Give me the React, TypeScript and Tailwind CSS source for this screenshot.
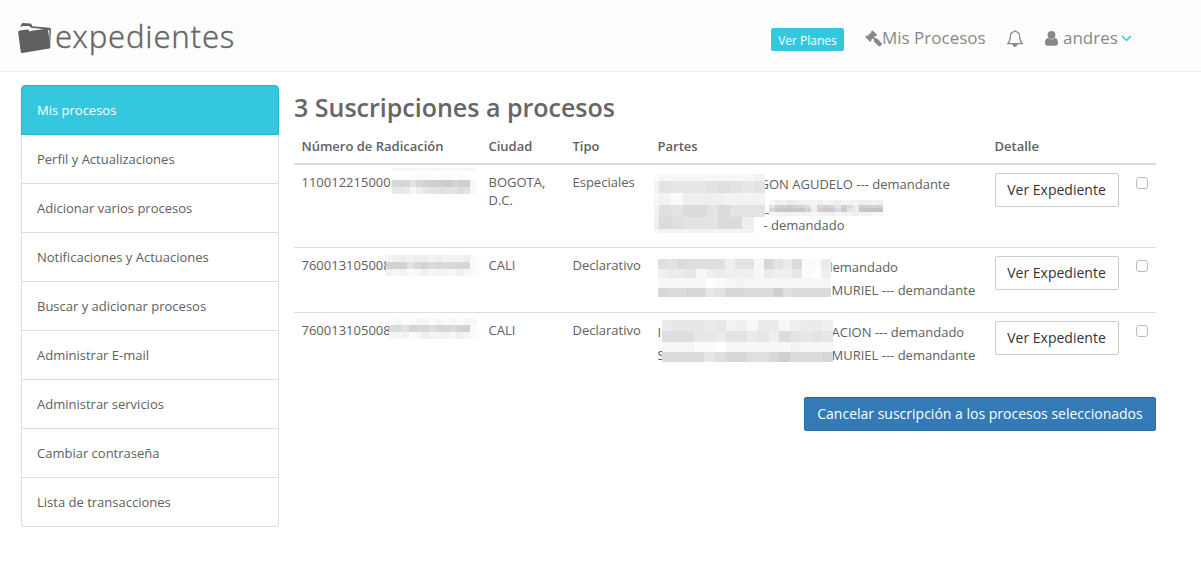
import React from 'react';

interface MosaicProps {
  rows: string[];
  cell: number;
  heights: number[];
  className: string;
}

// Each hex digit is a grey level, "." leaves the cell empty
const Mosaic: React.FC<MosaicProps> = ({ rows, cell, heights, className }) => (
  <span className={`absolute flex flex-col ${className}`} aria-hidden="true">
    {rows.map((row, y) => (
      <span key={y} className="flex" style={{ height: heights[y] }}>
        {row.split('').map((level, x) => {
          const grey = 195 + parseInt(level, 16) * 4;
          return <span key={x} style={{ width: cell, background: level === '.' ? 'none' : `rgb(${grey},${grey},${grey})` }} />;
        })}
      </span>
    ))}
  </span>
);

const FolderLogo: React.FC = () => (
  <svg className="w-[34px] h-[32px] shrink-0" viewBox="0 0 34 32" fill="#606060">
    <path d="M2.3 5.2 3.3 2.2Q3.8 1 5 1L12 1.6Q13.2 1.7 13.7 2.8L14.4 4.2 31.5 5.8Q33.2 6 33 7.5L32 25.6 31.3 25.8 31.4 8.6 29.9 7.4 13 5.8 11.8 4.6Q11.4 3.9 10.4 3.9L4.5 4Z" />
    <path d="M1.5 8.6Q.1 9 .2 10.4L2.7 29.7Q3 31.2 4.4 30.9L31.4 26.6Q32.6 26.3 32.4 25L30 7.8Q29.7 6.5 28.4 6.7L13.7 8.7 11.7 9.5 10.6 8.1Q10.1 7.3 9.2 7.4Z" />
  </svg>
);

const GavelIcon: React.FC = () => (
  <svg className="w-[17px] h-[17px] shrink-0" viewBox="0 0 17 17" fill="#888">
    <path d="M7.4.2 12.2 5 10.9 6.4 10.1 5.9 9.1 6.9 10.7 8.6 11.6 8 16.5 12.9Q17.3 13.9 16.5 14.9L15.4 16Q14.4 16.8 13.4 15.9L8.7 11.2 9.2 10.1 7.6 8.4 6.1 9.9 6.6 10.7 5.3 12 .2 7 1.6 5.6 2.4 6.1 6.6 2 6 1.4Z" />
  </svg>
);

const BellIcon: React.FC = () => (
  <svg className="w-4 h-[17px] shrink-0" viewBox="0 0 16 17" fill="none" stroke="#888" strokeWidth="1.2">
    <path d="M7 1.6Q8 .2 9 1.6C11.7 2.2 12.6 4.3 12.6 6.6 12.7 10 13.6 12.2 15.3 13.7H.7C2.4 12.2 3.3 10 3.4 6.6 3.4 4.3 4.3 2.2 7 1.6Z" />
    <path d="M6 14Q6.3 16.3 8 16.3T10 14Z" fill="#888" />
  </svg>
);

const UserIcon: React.FC = () => (
  <svg className="w-[13px] h-[15px] shrink-0" viewBox="0 0 13 15" fill="#888">
    <circle cx="6.5" cy="4" r="3.9" />
    <path d="M3.1 7.1Q6.5 9.9 9.9 7.1C12.4 7.4 13 9.6 13 12Q13 14.7 10.6 14.7H2.4Q0 14.7 0 12C0 9.6.6 7.4 3.1 7.1Z" />
  </svg>
);

const menuItems = [
  'Mis procesos',
  'Perfil y Actualizaciones',
  'Adicionar varios procesos',
  'Notificaciones y Actuaciones',
  'Buscar y adicionar procesos',
  'Administrar E-mail',
  'Administrar servicios',
  'Cambiar contraseña',
  'Lista de transacciones',
];

const Header: React.FC = () => (
  <header className="mt-1 h-[68px] bg-[#fdfdfd] border-b border-[#f0f0f0] flex justify-between items-start pl-[18px] pr-[69px]">
    <a href="#" className="flex items-start pt-[18px]">
      <FolderLogo />
      <span className="ml-[3px] -mt-[4px] text-[31px] leading-[36px] tracking-[0.8px] text-[#666] font-['Noto_Sans'] font-light [-webkit-text-stroke:0.3px_#666]">expedientes</span>
    </a>
    <nav className="flex items-start pt-[22px] text-[17px] leading-6 text-[#888]">
      <a href="#" className="mt-[2px] h-[23px] w-[73px] rounded-[2px] bg-[#33c8de] text-center text-[12px] leading-[25px] text-white">Ver Planes</a>
      <a href="#" className="ml-[21px] flex w-[121px] items-center whitespace-nowrap">
        <GavelIcon />
        <span>Mis Procesos</span>
      </a>
      <a href="#" className="ml-[21px] mt-[4px]"><BellIcon /></a>
      <a href="#" className="ml-[22px] flex items-center whitespace-nowrap">
        <UserIcon />
        <span className="ml-[5px] w-[55px]">andres</span>
        <svg className="ml-[3px] w-[11px] h-[7px]" viewBox="0 0 11 7" fill="none" stroke="#33c8de" strokeWidth="1.5">
          <path d="m1 1 4.5 4.5L10 1" />
        </svg>
      </a>
    </nav>
  </header>
);

const Sidebar: React.FC = () => (
  <aside className="mt-[13px] w-[258px] shrink-0 text-[13px]">
    <ul>
      {menuItems.map((item, i) => (
        <li
          key={item}
          className={
            i === 0
              ? 'h-[50px] rounded-t border border-[#26b4c9] bg-[#33c8de] text-white'
              : 'h-[49px] border border-t-0 border-[#ddd] last:rounded-b'
          }
        >
          <a href="#" className={i === 0 ? 'block px-[15px] leading-[49px]' : 'block px-[15px] leading-[48px]'}>{item}</a>
        </li>
      ))}
    </ul>
  </aside>
);

interface Proceso {
  numero: string;
  ciudad: string;
  tipo: string;
  height: string;
  numeroMask: React.ReactNode;
  partes: React.ReactNode;
}

const procesos: Proceso[] = [
  {
    numero: '110012215000',
    ciudad: 'BOGOTA, D.C.',
    tipo: 'Especiales',
    height: 'h-[83px]',
    numeroMask: (
      <Mosaic
        rows={['dddddddddddddd', '..............', 'ffffeeefeefeff', '5558543332433d', '99adb98878868d']}
        cell={6}
        heights={[3, 3, 6, 7, 7]}
        className="left-[90px] top-[3px]"
      />
    ),
    partes: (
      <>
        <p className="ml-[102px] pt-[10px]">GON AGUDELO --- demandante</p>
        <p className="ml-[106px] pt-[5px] leading-[18px]">_<br />- demandado</p>
        <Mosaic
          rows={[
            'eddddddddddddddddcc',
            'c889999998877889988',
            'dcceebbbbbbbccccccc',
            'c778866668866888888',
            'b66778888886666bb..',
            'dcccccccccccccccc..',
          ]}
          cell={5.9}
          heights={[7, 12, 12, 12, 12, 4]}
          className="left-[-4px] top-[9px]"
        />
        <Mosaic
          rows={['dbcabcccbdcbcccbbcb', '8432447c545936a3344', '5211114b322628a1000', 'dccbcccdccbdccbccdd']}
          cell={6.05}
          heights={[5, 3, 4, 4]}
          className="left-[111px] top-[35px]"
        />
      </>
    ),
  },
  {
    numero: '760013105008',
    ciudad: 'CALI',
    tipo: 'Declarativo',
    height: 'h-[65px]',
    numeroMask: (
      <Mosaic rows={['cbbcbbcbcccbe', '444854656555e', 'cdcedbdccdbde']} cell={7} heights={[7, 7, 7]} className="left-[84px] top-[7px]" />
    ),
    partes: (
      <>
        <p className="ml-[167px] pt-[10px]">demandado</p>
        <p className="ml-[174px] pt-[5px]">MURIEL --- demandante</p>
        <Mosaic
          rows={['7867777b88d58a6eea', 'baa9dbabbbdabb9efb', 'dddddfedcddddddddd', '566559855666376666']}
          cell={9.65}
          heights={[10, 9, 10, 9]}
          className="left-0 top-[11px]"
        />
      </>
    ),
  },
  {
    numero: '760013105008',
    ciudad: 'CALI',
    tipo: 'Declarativo',
    height: 'h-[64px]',
    numeroMask: (
      <Mosaic rows={['edeeddedededd', '668455755643e', 'cdcedbcccdbde']} cell={6.8} heights={[7, 7, 7]} className="left-[87px] top-[5px]" />
    ),
    partes: (
      <>
        <p className="ml-[174px] pt-[10px]">ACION --- demandado</p>
        <p className="ml-[174px] pt-[5px]">MURIEL --- demandante</p>
        <span className="absolute left-0 top-[8px] leading-[23px]">I<br />S</span>
        <Mosaic
          rows={['a999a9cbdaadbaab', '77799a88a9b68989', 'dddeefddddddcddd', '6666975577536665']}
          cell={10.72}
          heights={[11, 11, 10, 10]}
          className="left-[4px] top-[7px]"
        />
      </>
    ),
  },
];

const App: React.FC = () => {
  return (
    <div className="h-[566px] overflow-hidden bg-white font-['Open_Sans',sans-serif] text-[#606060]">
      <Header />
      <div className="flex pl-[21px]">
        <Sidebar />
        <main className="ml-[15px] w-[862px] pt-[18px] text-[13px]">
          <h1 className="text-[25px] font-semibold leading-[34px] text-[#666]">3 Suscripciones a procesos</h1>
          <div className="grid grid-cols-[187px_84px_85px_337px_137px_24px] h-[41px] border-b-2 border-[#ddd] pt-[13px] pl-[7.5px] font-semibold leading-[18px]">
            <span>Número de Radicación</span>
            <span>Ciudad</span>
            <span>Tipo</span>
            <span>Partes</span>
            <span>Detalle</span>
          </div>
          {procesos.map((p, i) => (
            <div
              key={i}
              className={`grid grid-cols-[187px_84px_85px_337px_137px_24px] pl-[7.5px] leading-[18px] border-[#ddd] ${p.height} ${i < 2 ? 'border-b' : ''}`}
            >
              <div className="relative pt-[8px]">
                {p.numero}
                {p.numeroMask}
              </div>
              <div className="pt-[8px] pr-4">{p.ciudad}</div>
              <div className="pt-[8px]">{p.tipo}</div>
              <div className="relative whitespace-nowrap">{p.partes}</div>
              <div className="pt-[8px]">
                <button className="h-[34px] w-[124px] rounded-[2px] border border-[#ccc] bg-white text-[14px] text-[#333]">Ver Expediente</button>
              </div>
              <div className="pt-[12px] pl-[4px]">
                <input type="checkbox" className="block h-[12px] w-[12px] appearance-none rounded-[3px] border border-[#bbb] bg-white" />
              </div>
            </div>
          ))}
          <div className="flex justify-end pt-[20px]">
            <button className="h-[34px] w-[352px] rounded-[2px] border border-[#2e6da4] bg-[#337ab7] pb-[2px] text-[14px] text-white">
              Cancelar suscripción a los procesos seleccionados
            </button>
          </div>
        </main>
      </div>
    </div>
  );
};

export default App;
